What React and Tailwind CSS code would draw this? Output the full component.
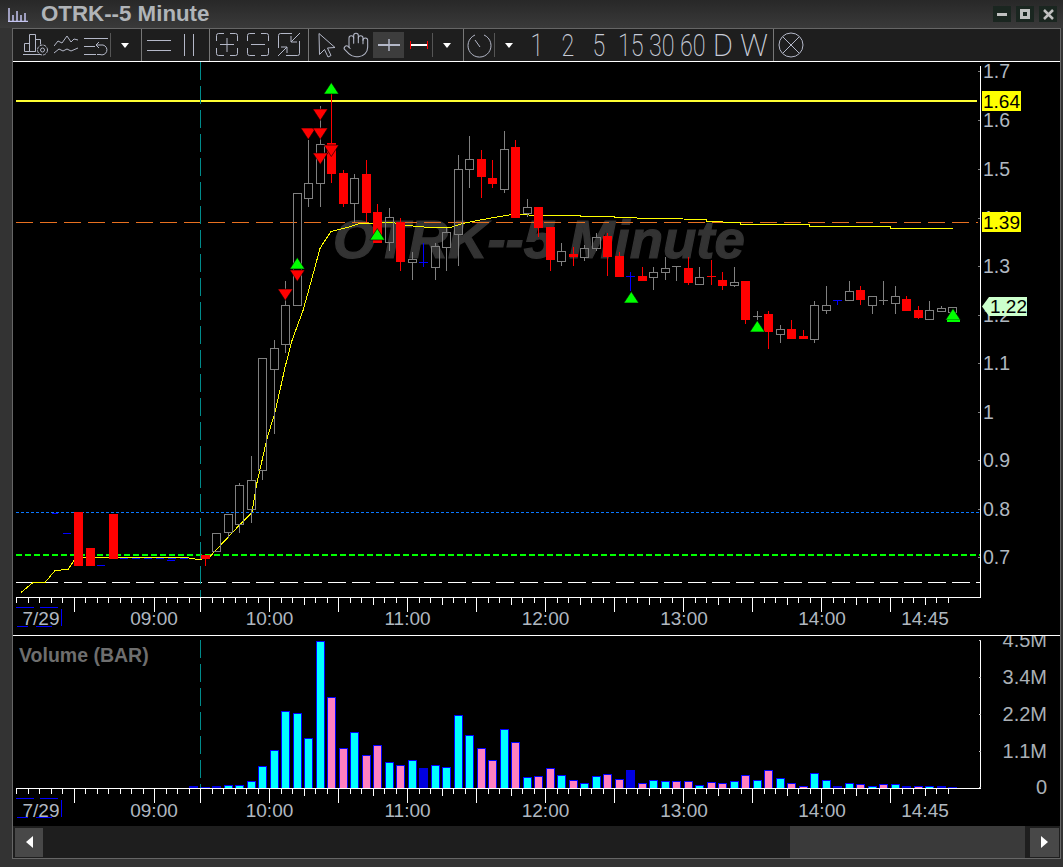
import { Hand } from "lucide-react";

const TOOL = "#b4b8c8";
const cx = (k) => 205.3 + 11.5 * k;

// [kind, bodyTop, bodyBottom, wickTop, wickBottom], kind r=red h=hollow b=blue doji g=gray doji
const CANDLES = [
  ["r", 555, 559, 555, 566], ["h", 533, 551, 533, 551], ["h", 514, 532, 514, 538], ["h", 485, 524, 483, 533],
  ["h", 480, 509, 456, 523], ["h", 358, 470, 358, 480], ["h", 348, 369, 340, 434], ["h", 305, 344, 281, 353],
  ["h", 193, 305, 193, 305], ["h", 183, 198, 140, 207], ["h", 144, 183, 106, 207], ["r", 143, 174, 93, 183],
  ["r", 173, 204, 170, 207], ["h", 178, 203, 174, 222], ["r", 174, 213, 160, 222], ["r", 212, 243, 204, 243],
  ["h", 217, 242, 208, 251], ["r", 222, 262, 218, 271], ["h", 259, 262, 252, 280], ["b", 262, 262, 243, 267],
  ["h", 246, 267, 243, 280], ["h", 232, 247, 228, 271], ["h", 169, 234, 155, 266], ["h", 159, 169, 136, 188],
  ["r", 159, 177, 150, 198], ["r", 178, 184, 160, 188], ["h", 149, 189, 131, 193], ["r", 147, 218, 140, 218],
  ["h", 207, 213, 199, 217], ["r", 207, 228, 207, 237], ["r", 227, 260, 227, 271], ["h", 251, 261, 243, 266],
  ["r", 254, 257, 247, 266], ["h", 248, 257, 245, 261], ["h", 237, 248, 233, 251], ["r", 236, 257, 233, 276],
  ["r", 256, 277, 252, 277], ["b", 276, 276, 272, 291], ["r", 276, 281, 267, 281], ["h", 272, 277, 267, 290],
  ["h", 268, 272, 257, 280], ["g", 266, 266, 266, 281], ["r", 268, 283, 257, 285], ["h", 277, 284, 267, 285],
  ["r", 276, 277, 260, 285], ["r", 280, 286, 272, 290], ["h", 282, 285, 267, 287], ["r", 281, 320, 281, 324],
  ["g", 316, 316, 311, 320], ["r", 314, 332, 311, 349], ["h", 329, 334, 325, 343], ["r", 329, 339, 320, 339],
  ["r", 336, 339, 330, 339], ["h", 305, 339, 301, 343], ["h", 305, 310, 286, 314], ["b", 300, 300, 300, 305],
  ["h", 291, 300, 281, 300], ["r", 290, 300, 286, 305], ["h", 296, 305, 296, 314], ["g", 300, 300, 281, 305],
  ["h", 296, 303, 286, 314], ["r", 299, 311, 296, 311], ["r", 310, 318, 306, 319], ["h", 310, 319, 301, 319],
  ["h", 308, 311, 306, 312], ["h", 307, 312, 307, 312],
];

const UP = [[331.3, 83], [297.3, 258], [377.3, 229], [631.3, 292], [757.3, 321], [953, 309]];
const DOWN = [[285.3, 289], [297.3, 270], [308.3, 128], [320.3, 109], [320.3, 128], [320.3, 153], [331.3, 145]];

const MA = "21,592 33,582 45,582 55,570 68,569 74,560 80,557 188,557 190,558 200,559 210,556 240,524 252,512 257,482 267,438 275,412 285,367 292,340 303,310 310,285 320,248 323,243 331,231 347,227 360,223 393,222 407,225 430,227 450,227 463,223 477,220 500,216 512,214 545,215 580,215 580,216 614,216 614,217 660,218 706,219 706,221 740,222 740,224 809,224 809,226 890,226 890,228 953,228";

const VOLUME = [
  ["b", 2], ["b", 1], ["b", 2], ["c", 3], ["c", 3], ["c", 7], ["c", 22], ["c", 38], ["c", 77], ["c", 75], ["c", 50], ["c", 147],
  ["p", 91], ["p", 40], ["c", 56], ["p", 33], ["p", 43], ["c", 26], ["p", 23], ["c", 28], ["b", 20], ["c", 23], ["c", 21], ["c", 73],
  ["c", 53], ["p", 40], ["p", 28], ["c", 59], ["p", 46], ["c", 11], ["p", 12], ["p", 20], ["c", 13], ["p", 8], ["c", 5], ["c", 12],
  ["p", 14], ["p", 9], ["b", 18], ["p", 5], ["c", 8], ["c", 7], ["p", 7], ["p", 7], ["c", 3], ["p", 6], ["p", 5], ["c", 7], ["p", 13],
  ["c", 8], ["p", 18], ["c", 10], ["p", 5], ["p", 2], ["c", 15], ["c", 8], ["b", 2], ["c", 5], ["p", 4], ["c", 2], ["p", 4], ["c", 4],
  ["b", 2], ["p", 2], ["c", 2], ["b", 2], ["b", 1],
];

const PRICES = [["1.7", 71], ["1.6", 120], ["1.5", 169], ["1.4", 218], ["1.3", 266], ["1.2", 315], ["1.1", 363], ["1", 412], ["0.9", 460], ["0.8", 509], ["0.7", 557]];
const TIMES = [["09:00", 154], ["10:00", 269.5], ["11:00", 407.5], ["12:00", 545.5], ["13:00", 684], ["14:00", 822], ["14:45", 925]];
const VOL_LABELS = [["4.5M", 640], ["3.4M", 677], ["2.2M", 714], ["1.1M", 751], ["0", 787]];

function Candle({ c, k }) {
  const [kind, top, bottom, hi, lo] = c;
  const x = Math.floor(cx(k));
  const color = kind === "r" ? "#ff0000" : kind === "b" ? "#0000ff" : "#808080";
  return (
    <g>
      {hi < top && <rect x={x} y={hi} width="1" height={top - hi} fill={color} />}
      {lo > bottom && <rect x={x} y={bottom} width="1" height={lo - bottom} fill={color} />}
      {kind === "r" && <rect x={x - 4} y={top} width="9" height={Math.max(bottom - top, 1)} fill={color} />}
      {kind === "h" && <rect x={x - 3.5} y={top + 0.5} width="8" height={bottom - top} fill="none" stroke={color} />}
      {(kind === "b" || kind === "g") && <rect x={x - 4} y={top} width="9" height="1" fill={color} />}
    </g>
  );
}

function Ticks({ y, lens }) {
  const ticks = [];
  for (let i = 0; i <= 81; i++) {
    const major = i === 5 || i === 12 || i === 16 || (i >= 22 && (i - 22) % 6 === 0);
    const medium = i >= 25 && (i - 25) % 6 === 0;
    const h = major ? lens[0] : medium ? lens[1] : lens[2];
    ticks.push(<rect key={i} x={Math.round(16.3 + 11.5 * i)} y={y} width="1" height={h} fill="#fff" />);
  }
  return <g shapeRendering="crispEdges">{ticks}</g>;
}

function TimeLabels({ y, top }) {
  return (
    <g>
      {TIMES.map(([t, x]) => (
        <text key={t} x={x} y={y} textAnchor="middle" dominantBaseline="central" className="text-[19px] fill-[#b0b8c0]">{t}</text>
      ))}
      <text x="41" y={y} textAnchor="middle" dominantBaseline="central" className="text-[19px] fill-[#b0b8c0]">7/29</text>
      <g stroke="#0000ff" shapeRendering="crispEdges">
        <path d={`M16 ${top}.5h18M40 ${top}.5h18M17 ${top + 19}.5h11M36 ${top + 19}.5h16M61.5 ${top + 2}v17`} />
      </g>
    </g>
  );
}

function PriceChart() {
  return (
    <svg viewBox="13 62 1047 573" className="block w-[1047px] h-[573px]">
      <text x="333" y="258" stroke="#333333" strokeWidth="1.2" className="text-[54.500px] font-bold italic fill-[#333333]">OTRK--5 Minute</text>
      <g shapeRendering="crispEdges">
        <rect x="16" y="100" width="961" height="2" fill="#ffff33" />
        <path d="M16 222.5H978" stroke="#e87020" strokeDasharray="17 7" />
        <path d="M16 512.5H980" stroke="#0a78ff" strokeDasharray="3 2" />
        <path d="M16 555H980" stroke="#00ff00" strokeWidth="2" strokeDasharray="6 3" />
        <path d="M16 582.5H980" stroke="#fff" strokeDasharray="18 6" />
        <path d="M200.5 62V597" stroke="#008b8b" strokeDasharray="18 6" />
        <path d="M52 513.5h6M63 533.5h8M97 565.5h8M120 558.5h70M167 560.5h9" stroke="#0000ff" strokeDasharray="8 4" />
      </g>
      <polyline points={MA} fill="none" stroke="#ffff00" strokeWidth="1" shapeRendering="crispEdges" transform="translate(0 0.5)" />
      <g shapeRendering="crispEdges">
        <rect x="74" y="512" width="9" height="54" fill="#ff0000" />
        <rect x="86" y="548" width="9" height="18" fill="#ff0000" />
        <rect x="109" y="514" width="9" height="45" fill="#ff0000" />
        {CANDLES.map((c, k) => <Candle key={k} c={c} k={k} />)}
      </g>
      {DOWN.map(([x, y], i) => (
        <polygon key={i} points={`${x - 7.5},${y} ${x + 7.5},${y} ${x},${y + 11.5}`} fill="#ff0000" stroke="#000" strokeWidth="0.6" />
      ))}
      {UP.map(([x, y], i) => (
        <polygon key={i} points={`${x},${y - 0.5} ${x + 7.5},${y + 11} ${x - 7.5},${y + 11}`} fill="#00ff00" stroke="#000" strokeWidth="0.6" />
      ))}
      <rect x="947" y="320" width="13" height="2" fill="#00ff00" />
      <g shapeRendering="crispEdges">
        <path d="M980.5 66V597.5H16" fill="none" stroke="#fff" />
        {PRICES.map(([p, y]) => <rect key={p} x="978" y={y} width="2" height="1" fill="#808080" />)}
      </g>
      <Ticks y={598} lens={[14, 7, 5]} />
      <TimeLabels y={618} top={607} />
      {PRICES.map(([p, y]) => (
        <text key={p} x="983" y={y} dominantBaseline="central" className="text-[19.500px] fill-[#b0b8c0]">{p}</text>
      ))}
      <rect x="982" y="91" width="39" height="20" fill="#ffff00" />
      <text x="983" y="101" dominantBaseline="central" className="text-[19px] fill-black">1.64</text>
      <rect x="982" y="212" width="39" height="20" fill="#ffff00" />
      <text x="983" y="222.5" dominantBaseline="central" className="text-[19px] fill-black">1.39</text>
      <polygon points="982,306.5 989,297 1027,297 1027,316 989,316" fill="#ccffcc" />
      <text x="990" y="306.5" dominantBaseline="central" className="text-[19px] fill-black">1.22</text>
    </svg>
  );
}

function VolumeChart() {
  return (
    <svg viewBox="13 636 1047 190" className="block w-[1047px] h-[190px]">
      <text x="19" y="655" dominantBaseline="central" className="text-[19.500px] font-bold fill-[#6e6e6e]">Volume (BAR)</text>
      <g shapeRendering="crispEdges">
        <path d="M200.5 640V788" stroke="#008b8b" strokeDasharray="18 6" />
        {VOLUME.map(([kind, h], i) => {
          const x = Math.floor(cx(i - 1));
          if (kind === "b") return <rect key={i} x={x - 4} y={788 - h} width="9" height={h} fill="#0000e0" />;
          return <rect key={i} x={x - 3.5} y={788 - h + 0.5} width="8" height={h} fill={kind === "c" ? "#00ffff" : "#ff80c0"} stroke="#0000ff" />;
        })}
        <path d="M980.5 640V788.5H16" fill="none" stroke="#fff" />
        {VOL_LABELS.map(([l, y]) => <rect key={l} x="979" y={y} width="2" height="1" fill="#ccc" />)}
      </g>
      <Ticks y={789} lens={[14, 7, 5]} />
      <TimeLabels y={810} top={798} />
      {VOL_LABELS.map(([l, y]) => (
        <text key={l} x="1047" y={y} textAnchor="end" dominantBaseline="central" className="text-[20px] fill-[#aab0b6]">{l}</text>
      ))}
    </svg>
  );
}

function ToolIcon({ w = 24, children, className = "" }) {
  return (
    <svg width={w} height="26" viewBox={`0 0 ${w} 26`} fill="none" stroke={TOOL} strokeWidth="1" className={className}>
      {children}
    </svg>
  );
}

const BoxCorners = () => (
  <path d="M9 1.5H3.5a2 2 0 0 0-2 2V9M15 1.5h5.5a2 2 0 0 1 2 2V9M1.5 16v5.5a2 2 0 0 0 2 2H9M22.5 16v5.5a2 2 0 0 1-2 2H15" />
);

const Sep = ({ ml, short }) => (
  <div className={short ? "w-px h-[24px] bg-[#555]" : "w-px self-stretch bg-[#777]"} style={{ marginLeft: ml }} />
);

const Caret = ({ ml }) => (
  <div className="w-0 h-0 border-x-[4px] border-x-transparent border-t-[5px] border-t-white" style={{ marginLeft: ml }} />
);

function Interval({ label, w, ml, wide }) {
  return (
    <span
      className={`text-[31px] leading-none font-extralight text-center text-[#c8ccd8] font-['Roboto'] inline-block ${wide ? "scale-x-100" : "scale-x-75"}`}
      style={{ width: w, marginLeft: ml }}
    >
      {label}
    </span>
  );
}

function Toolbar() {
  return (
    <div className="h-[32px] bg-[#1e1e1e] flex items-center pl-[10px]">
      <ToolIcon w={25}>
        <path d="M0 22.5h18M1.5 19.500v-8h5v8zM6.5 19.500V2.5h6v17zM12.5 19.500v-12h5v5" />
        <circle cx="19.500" cy="18" r="5" strokeDasharray="3 1" />
        <circle cx="19.500" cy="18" r="2" />
      </ToolIcon>
      <ToolIcon className="ml-[6px]">
        <path d="M0 14l4-5 4 2 5-7 4 6 3-3 4 1M0 21l5-4 4 2 4-2 4 2 7-3" />
      </ToolIcon>
      <ToolIcon className="ml-[6px]">
        <path d="M0 6.500h24M0 14.500h11M0 22.500h12M12 13h7a5 5 0 1 1-3 9.500h-3M12 13l3-3M12 13l3 3" />
      </ToolIcon>
      <Sep ml="2px" short />
      <Caret ml="10px" />
      <Sep ml="12px" />
      <ToolIcon className="ml-[5px]"><path d="M0 8.5h24M0 18.5h24" /></ToolIcon>
      <ToolIcon className="ml-[13px]" w={10}><path d="M.5 2v22M9.5 2v22" /></ToolIcon>
      <Sep ml="15px" />
      <ToolIcon className="ml-[5px]"><BoxCorners /><path d="M12 6v14M5 12.5h14" /></ToolIcon>
      <ToolIcon className="ml-[7px]"><BoxCorners /><path d="M5 12.5h14" /></ToolIcon>
      <ToolIcon className="ml-[7px]">
        <path d="M15 1.5H3.5a2 2 0 0 0-2 2V16M22.5 9v12.500a2 2 0 0 1-2 2H9M23 1l-9 9M14 4v6h6M1 24l9-9M4 15h6v6" />
      </ToolIcon>
      <Sep ml="7px" />
      <ToolIcon className="ml-[9px]" w={18}>
        <path d="M1 1.500l16 14-7.500.5 3.500 7.500-3 1.500-3.500-7.500-5 5z" />
      </ToolIcon>
      <Hand size={28} color={TOOL} strokeWidth={0.9} className="ml-[6px]" />
      <div className="ml-[3px] w-[31px] self-stretch my-[3px] bg-[#3d3d3d] flex items-center justify-center">
        <svg width="24" height="14" stroke={TOOL}>
          <path d="M1 7h22" strokeWidth="2" />
          <path d="M12 1v12" strokeWidth="1.500" />
        </svg>
      </div>
      <svg width="18" height="10" className="ml-[6px]">
        <path d="M.5 1v8M17.500 1v8" stroke="#ff0000" strokeWidth="1" />
        <path d="M1 5h16" stroke="#fff" strokeWidth="2" />
      </svg>
      <Sep ml="4px" short />
      <Caret ml="10px" />
      <Sep ml="12px" />
      <ToolIcon className="ml-[3px]" w={26}>
        <path d="M17 3a11.500 11.500 0 1 1-9 0M13 15L8 8" />
      </ToolIcon>
      <Sep ml="1px" short />
      <Caret ml="10px" />
      <Interval label="1" w={32} ml="8px" />
      <Interval label="2" w={32} ml="-1px" />
      <Interval label="5" w={32} ml="-1px" />
      <Interval label="15" w={32} ml="-1px" />
      <Interval label="30" w={32} ml="-1px" />
      <Interval label="60" w={32} ml="-1px" />
      <Interval label="D" w={30} ml="0px" wide />
      <Interval label="W" w={30} ml="1px" wide />
      <Sep ml="4px" />
      <ToolIcon className="ml-[4px]" w={26}>
        <circle cx="13" cy="13" r="12" />
        <path d="M5 5l16 16M21 5L5 21" />
      </ToolIcon>
    </div>
  );
}

function ScrollBar() {
  return (
    <div className="h-[32px] bg-[#1e1e1e] flex items-center pl-[2px] pr-[1px]">
      <div className="w-[28px] h-[29px] bg-[#484848] flex items-center justify-center">
        <div className="w-0 h-0 border-y-[6px] border-y-transparent border-r-[7px] border-r-white" />
      </div>
      <div className="flex-1 self-stretch flex pl-[747px] pr-[5px]">
        <div className="flex-1 bg-[#3a3a3a]" />
      </div>
      <div className="w-[29px] h-[29px] bg-[#484848] flex items-center justify-center">
        <div className="w-0 h-0 border-y-[6px] border-y-transparent border-l-[7px] border-l-white" />
      </div>
    </div>
  );
}

const WinBtn = ({ children }) => (
  <div className="w-[18px] h-[16px] bg-[#1a2620] flex items-center justify-center">{children}</div>
);

export default function App() {
  return (
    <div className="w-[1063px] h-[867px] flex flex-col overflow-hidden bg-[#333333] font-['Liberation_Sans',sans-serif]">
      <div className="h-[28px] flex items-center pl-[8px] pr-[6px] bg-gradient-to-b from-[#282828] to-[#3a3a3a]">
        <svg width="20" height="16" stroke="#c4c4f0" strokeWidth="1.500">
          <path d="M1 2v13M5 9v6M9 5v10M13 9v6M17 7v8M0 15.500h20" />
        </svg>
        <span className="ml-[13px] text-[22.300px] font-bold text-[#b0b4b8]">OTRK--5 Minute</span>
        <div className="ml-auto flex gap-[5px]">
          <WinBtn><div className="w-[10px] h-[3px] bg-[#c0c0c0]" /></WinBtn>
          <WinBtn><div className="w-[10px] h-[10px] border-[3px] border-[#c0c0c0]" /></WinBtn>
          <WinBtn>
            <svg width="11" height="11" stroke="#c0c0c0" strokeWidth="2.500"><path d="M1 1l9 9M10 1l-9 9" /></svg>
          </WinBtn>
        </div>
      </div>
      <div className="ml-[12px] w-[1049px] h-[831px] border border-[#666] bg-[#1e1e1e] flex flex-col">
        <Toolbar />
        <div className="border-t border-white bg-black"><PriceChart /></div>
        <div className="border-t border-white bg-black"><VolumeChart /></div>
        <ScrollBar />
      </div>
    </div>
  );
}
